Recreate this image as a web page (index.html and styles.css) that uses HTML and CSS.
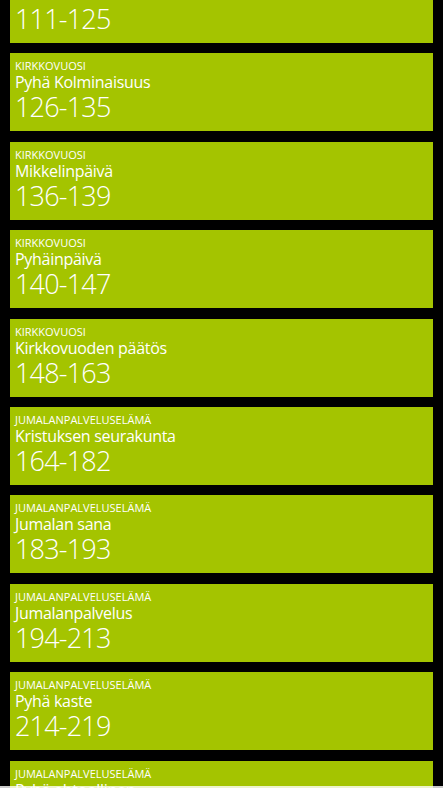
FILE: index.html
```html
<!DOCTYPE html>
<html lang="fi">
<head>
<meta charset="UTF-8">
<meta name="viewport" content="width=device-width, initial-scale=1.0">
<title>Virsikirja</title>
<link rel="stylesheet" href="styles.css">
</head>
<body>

<div class="lista">
    <div class="tiili">
        <div class="ryhma">KIRKKOVUOSI</div>
        <div class="nimi">Helluntai</div>
        <div class="numerot">111-125</div>
    </div>
    <div class="tiili">
        <div class="ryhma">KIRKKOVUOSI</div>
        <div class="nimi">Pyhä Kolminaisuus</div>
        <div class="numerot">126-135</div>
    </div>
    <div class="tiili">
        <div class="ryhma">KIRKKOVUOSI</div>
        <div class="nimi">Mikkelinpäivä</div>
        <div class="numerot">136-139</div>
    </div>
    <div class="tiili">
        <div class="ryhma">KIRKKOVUOSI</div>
        <div class="nimi">Pyhäinpäivä</div>
        <div class="numerot">140-147</div>
    </div>
    <div class="tiili">
        <div class="ryhma">KIRKKOVUOSI</div>
        <div class="nimi">Kirkkovuoden päätös</div>
        <div class="numerot">148-163</div>
    </div>
    <div class="tiili">
        <div class="ryhma">JUMALANPALVELUSELÄMÄ</div>
        <div class="nimi">Kristuksen seurakunta</div>
        <div class="numerot">164-182</div>
    </div>
    <div class="tiili">
        <div class="ryhma">JUMALANPALVELUSELÄMÄ</div>
        <div class="nimi">Jumalan sana</div>
        <div class="numerot">183-193</div>
    </div>
    <div class="tiili">
        <div class="ryhma">JUMALANPALVELUSELÄMÄ</div>
        <div class="nimi">Jumalanpalvelus</div>
        <div class="numerot">194-213</div>
    </div>
    <div class="tiili">
        <div class="ryhma">JUMALANPALVELUSELÄMÄ</div>
        <div class="nimi">Pyhä kaste</div>
        <div class="numerot">214-219</div>
    </div>
    <div class="tiili">
        <div class="ryhma">JUMALANPALVELUSELÄMÄ</div>
        <div class="nimi">Pyhä ehtoollinen</div>
        <div class="numerot">220-231</div>
    </div>
</div>

<div class="alareuna"></div>

</body>
</html>
```

FILE: styles.css
```css
html,
body {
    margin: 0;
    padding: 0;
    background-color: #000;
    height: 100%;
    overflow: hidden;
}

body {
    font-family: "Open Sans", "Noto Sans", sans-serif;
    color: #fff;
}

/* lista on vieritetty hieman alaspäin, joten eka tiili jää puoliksi piiloon */
.lista {
    display: flex;
    flex-direction: column;
    gap: 10.4px;
    padding: 0 10px;
    margin-top: -35px;
}

.tiili {
    background-color: #a4c400;
    height: 78px;
    padding: 5px 5px 0 5px;
    box-sizing: border-box;
    flex-shrink: 0;
}

.ryhma {
    font-size: 11px;
    line-height: 15px;
}

.nimi {
    font-size: 16px;
    line-height: 18px;
    letter-spacing: -0.3px;
}

.numerot {
    font-size: 27px;
    font-weight: 300;
    line-height: 31px;
    letter-spacing: -0.8px;
}

/* ohut vaalea kaistale näytön alareunassa */
.alareuna {
    position: fixed;
    left: 0;
    right: 0;
    bottom: 0;
    height: 2px;
    background-color: rgba(255, 255, 255, 0.8);
}
```
